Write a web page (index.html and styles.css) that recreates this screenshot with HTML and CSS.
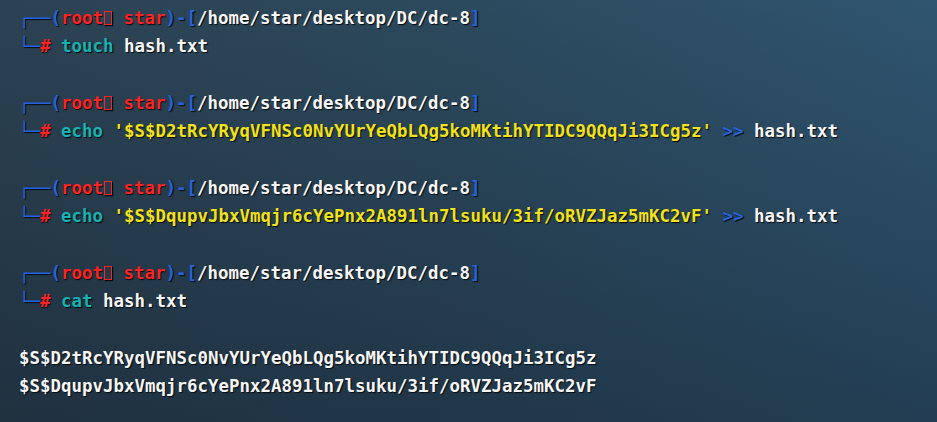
FILE: index.html
```html
<!DOCTYPE html>
<html lang="en">
<head>
    <meta charset="UTF-8">
    <title>Terminal</title>
    <link rel="stylesheet" href="styles.css">
</head>
<body>
    <div class="term">
        <div class="line"><span class="frame">┌──(</span><span class="user">root<span class="box"></span> star</span><span class="frame">)-[</span><span class="path">/home/star/desktop/DC/dc-8</span><span class="frame">]</span></div>
        <div class="line"><span class="frame">└─</span><span class="hash">#</span> <span class="cmd">touch</span> <span class="arg">hash.txt</span></div>
        <div class="line"> </div>
        <div class="line"><span class="frame">┌──(</span><span class="user">root<span class="box"></span> star</span><span class="frame">)-[</span><span class="path">/home/star/desktop/DC/dc-8</span><span class="frame">]</span></div>
        <div class="line"><span class="frame">└─</span><span class="hash">#</span> <span class="cmd">echo</span> <span class="str">'$S$D2tRcYRyqVFNSc0NvYUrYeQbLQg5koMKtihYTIDC9QQqJi3ICg5z'</span> <span class="op">&gt;&gt;</span> <span class="arg">hash.txt</span></div>
        <div class="line"> </div>
        <div class="line"><span class="frame">┌──(</span><span class="user">root<span class="box"></span> star</span><span class="frame">)-[</span><span class="path">/home/star/desktop/DC/dc-8</span><span class="frame">]</span></div>
        <div class="line"><span class="frame">└─</span><span class="hash">#</span> <span class="cmd">echo</span> <span class="str">'$S$DqupvJbxVmqjr6cYePnx2A891ln7lsuku/3if/oRVZJaz5mKC2vF'</span> <span class="op">&gt;&gt;</span> <span class="arg">hash.txt</span></div>
        <div class="line"> </div>
        <div class="line"><span class="frame">┌──(</span><span class="user">root<span class="box"></span> star</span><span class="frame">)-[</span><span class="path">/home/star/desktop/DC/dc-8</span><span class="frame">]</span></div>
        <div class="line"><span class="frame">└─</span><span class="hash">#</span> <span class="cmd">cat</span> <span class="arg">hash.txt</span></div>
        <div class="line"> </div>
        <div class="line out">$S$D2tRcYRyqVFNSc0NvYUrYeQbLQg5koMKtihYTIDC9QQqJi3ICg5z</div>
        <div class="line out">$S$DqupvJbxVmqjr6cYePnx2A891ln7lsuku/3if/oRVZJaz5mKC2vF</div>
    </div>
</body>
</html>
```

FILE: styles.css
```css
html, body {
    height: 100%;
}

body {
    margin: 0;
    overflow: hidden;
    background:
        linear-gradient(to bottom, rgba(10, 18, 30, 0) 0%, rgba(10, 18, 30, 0.35) 100%),
        linear-gradient(to right, #2c4252 0%, #2c4a5e 50%, #305570 100%);
    font-family: "DejaVu Sans Mono", "Liberation Mono", monospace;
    font-weight: bold;
    font-size: 17.45px;
    color: #f4f4f4;
}

.term {
    padding: 4px 0 0 19px;
}

.line {
    white-space: pre;
    height: 28.33px;
    line-height: 28.33px;
    text-shadow: 1px 1px 1px #050a10;
}

.frame,
.op {
    color: #2563e0;
}

.user,
.hash {
    color: #ff2424;
}

.box {
    display: inline-block;
    width: 8px;
    height: 14px;
    margin: 0 1px 0 1px;
    border: 1.5px solid #ff2424;
    box-sizing: border-box;
    vertical-align: -1px;
    box-shadow: 1px 1px 1px #050a10;
}

.path,
.arg,
.out {
    color: #f6f6f6;
}

.cmd {
    color: #17b2b2;
}

.str {
    color: #f2e21a;
}
```
